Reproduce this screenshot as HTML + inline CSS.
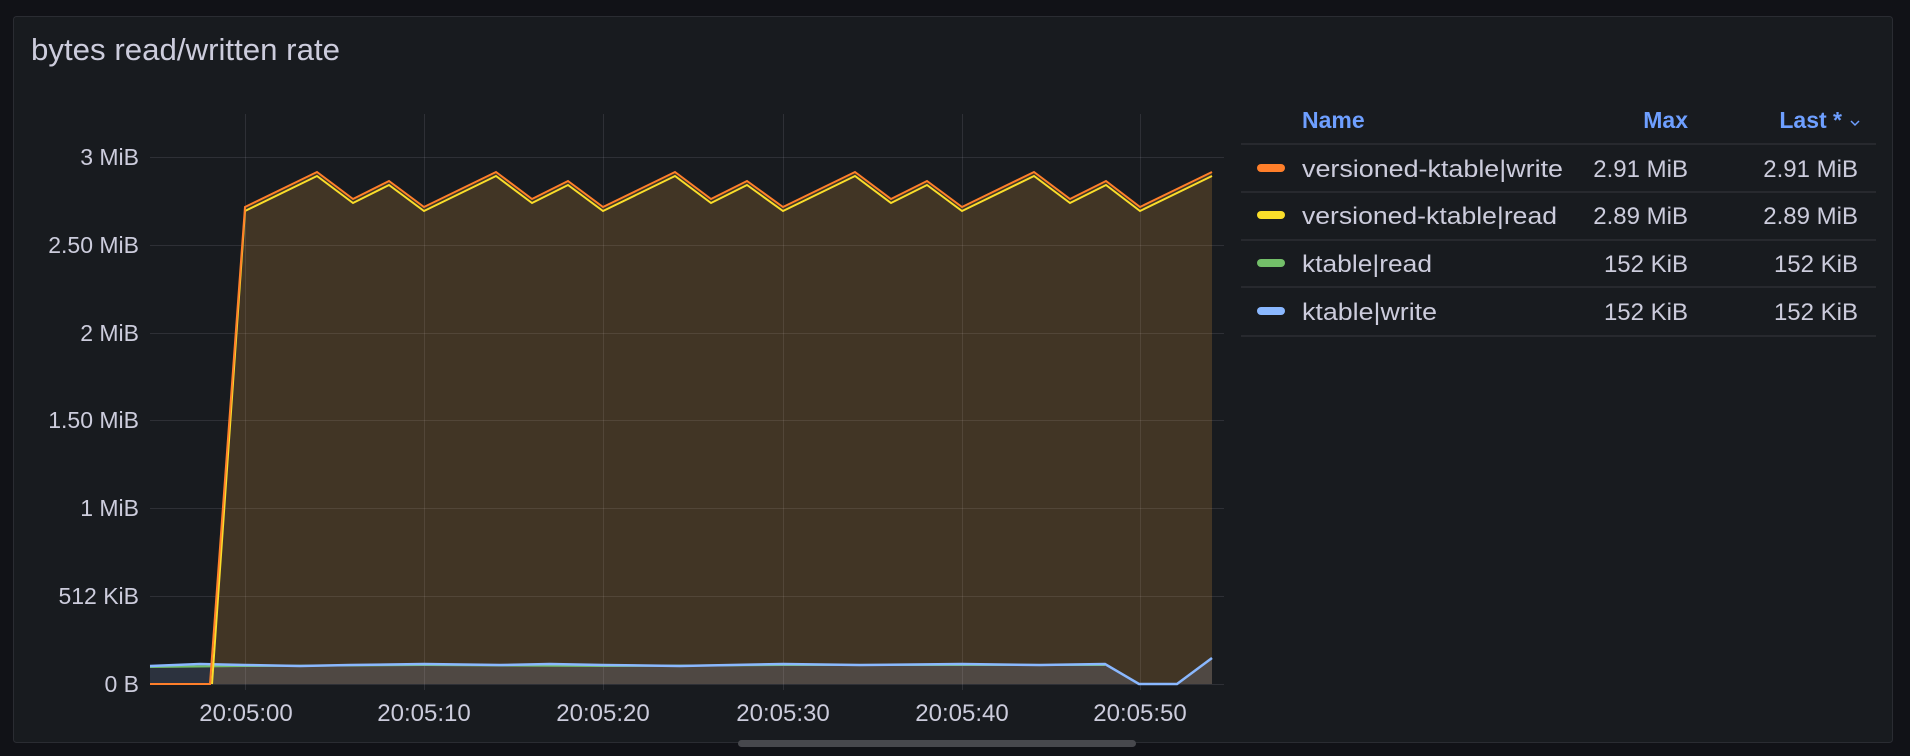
<!DOCTYPE html>
<html><head><meta charset="utf-8"><style>
html,body{margin:0;padding:0;background:#111217;width:1910px;height:756px;overflow:hidden;font-family:"Liberation Sans",sans-serif;}
svg text{font-family:"Liberation Sans",sans-serif;}
</style></head><body>
<svg width="1910" height="756" viewBox="0 0 1910 756" xmlns="http://www.w3.org/2000/svg">
<rect x="13.5" y="16.5" width="1879" height="726" rx="3" fill="#181b1f" stroke="#2a2c32"/>
<text x="31" y="60" font-size="31" fill="#ccccdc" textLength="309" lengthAdjust="spacingAndGlyphs">bytes read/written rate</text>
<g stroke="#ccccdc" stroke-opacity="0.12" stroke-width="1">
<line x1="150" y1="157.5" x2="1224" y2="157.5"/>
<line x1="150" y1="245.5" x2="1224" y2="245.5"/>
<line x1="150" y1="333.5" x2="1224" y2="333.5"/>
<line x1="150" y1="420.5" x2="1224" y2="420.5"/>
<line x1="150" y1="508.5" x2="1224" y2="508.5"/>
<line x1="150" y1="596.5" x2="1224" y2="596.5"/>
<line x1="150" y1="684.5" x2="1224" y2="684.5"/>
<line x1="245.5" y1="114" x2="245.5" y2="690"/>
<line x1="424.5" y1="114" x2="424.5" y2="690"/>
<line x1="603.5" y1="114" x2="603.5" y2="690"/>
<line x1="783.5" y1="114" x2="783.5" y2="690"/>
<line x1="962.5" y1="114" x2="962.5" y2="690"/>
<line x1="1140.5" y1="114" x2="1140.5" y2="690"/>
</g>
<g font-size="23" fill="#ccccdc" text-anchor="end">
<text x="139" y="165">3 MiB</text>
<text x="139" y="253">2.50 MiB</text>
<text x="139" y="341">2 MiB</text>
<text x="139" y="428">1.50 MiB</text>
<text x="139" y="516">1 MiB</text>
<text x="139" y="604">512 KiB</text>
<text x="139" y="692">0 B</text>
</g>
<g font-size="24" fill="#ccccdc" text-anchor="middle">
<text x="246" y="721">20:05:00</text>
<text x="424" y="721">20:05:10</text>
<text x="603" y="721">20:05:20</text>
<text x="783" y="721">20:05:30</text>
<text x="962" y="721">20:05:40</text>
<text x="1140" y="721">20:05:50</text>
</g>
<polygon fill="#e8a040" fill-opacity="0.2" points="210,684 245,207 317,172 353,199 389,181 424,207 496,172 532,199 568,181 603,207 675,172 711,199 747,181 783,207 855,172 891,199 927,181 962,207 1034,172 1070,199 1106,181 1140,207 1212,172 1212,684"/>
<polygon fill="#a8c0ff" fill-opacity="0.14" points="150,666 200,664 245,665 300,666 350,665 424,664 500,665 550,664 603,665 680,666 783,664 860,665 962,664 1040,665 1105,664 1139,684 1177,684 1212,658 1212,684 150,684"/>
<polyline fill="none" stroke="#73bf69" stroke-width="2" points="150,667 245,666 424,665 603,666 783,665 962,665 1105,665"/>
<polyline fill="none" stroke="#8ab8ff" stroke-width="2.5" points="150,666 200,664 245,665 300,666 350,665 424,664 500,665 550,664 603,665 680,666 783,664 860,665 962,664 1040,665 1105,664 1139,684 1177,684 1212,658"/>
<polyline fill="none" stroke="#fade2a" stroke-width="2" points="212,684 245,211 317,176 353,203 389,185 424,211 496,176 532,203 568,185 603,211 675,176 711,203 747,185 783,211 855,176 891,203 927,185 962,211 1034,176 1070,203 1106,185 1140,211 1212,176"/>
<polyline fill="none" stroke="#ff7f2a" stroke-width="2" points="150,684 210,684 245,207 317,172 353,199 389,181 424,207 496,172 532,199 568,181 603,207 675,172 711,199 747,181 783,207 855,172 891,199 927,181 962,207 1034,172 1070,199 1106,181 1140,207 1212,172"/>
<rect x="738" y="740" width="398" height="7" rx="3.5" fill="#47484d"/>
<g font-size="23" fill="#6e9fff" font-weight="bold">
<text x="1302" y="128">Name</text>
<text x="1688" y="128" text-anchor="end">Max</text>
<text x="1842" y="128" text-anchor="end">Last *</text>
</g>
<path d="M1851 121 l4 4 l4 -4" fill="none" stroke="#6e9fff" stroke-width="1.5"/>
<g stroke="#2c2e34" stroke-width="1.5">
<line x1="1241" y1="144" x2="1876" y2="144"/>
<line x1="1241" y1="192" x2="1876" y2="192"/>
<line x1="1241" y1="240" x2="1876" y2="240"/>
<line x1="1241" y1="287" x2="1876" y2="287"/>
<line x1="1241" y1="336" x2="1876" y2="336"/>
</g>
<rect x="1257" y="164" width="28" height="8" rx="4" fill="#ff7f2a"/>
<rect x="1257" y="211" width="28" height="8" rx="4" fill="#fade2a"/>
<rect x="1257" y="259" width="28" height="8" rx="4" fill="#73bf69"/>
<rect x="1257" y="307" width="28" height="8" rx="4" fill="#8ab8ff"/>
<g font-size="24" fill="#ccccdc">
<text x="1302" y="177" textLength="261" lengthAdjust="spacingAndGlyphs">versioned-ktable|write</text>
<text x="1302" y="224" textLength="255" lengthAdjust="spacingAndGlyphs">versioned-ktable|read</text>
<text x="1302" y="272" textLength="130" lengthAdjust="spacingAndGlyphs">ktable|read</text>
<text x="1302" y="320" textLength="135" lengthAdjust="spacingAndGlyphs">ktable|write</text>
</g>
<g font-size="24" fill="#ccccdc" text-anchor="end">
<text x="1688" y="177">2.91 MiB</text>
<text x="1858" y="177">2.91 MiB</text>
<text x="1688" y="224">2.89 MiB</text>
<text x="1858" y="224">2.89 MiB</text>
<text x="1688" y="272">152 KiB</text>
<text x="1858" y="272">152 KiB</text>
<text x="1688" y="320">152 KiB</text>
<text x="1858" y="320">152 KiB</text>
</g>
</svg>
</body></html>
